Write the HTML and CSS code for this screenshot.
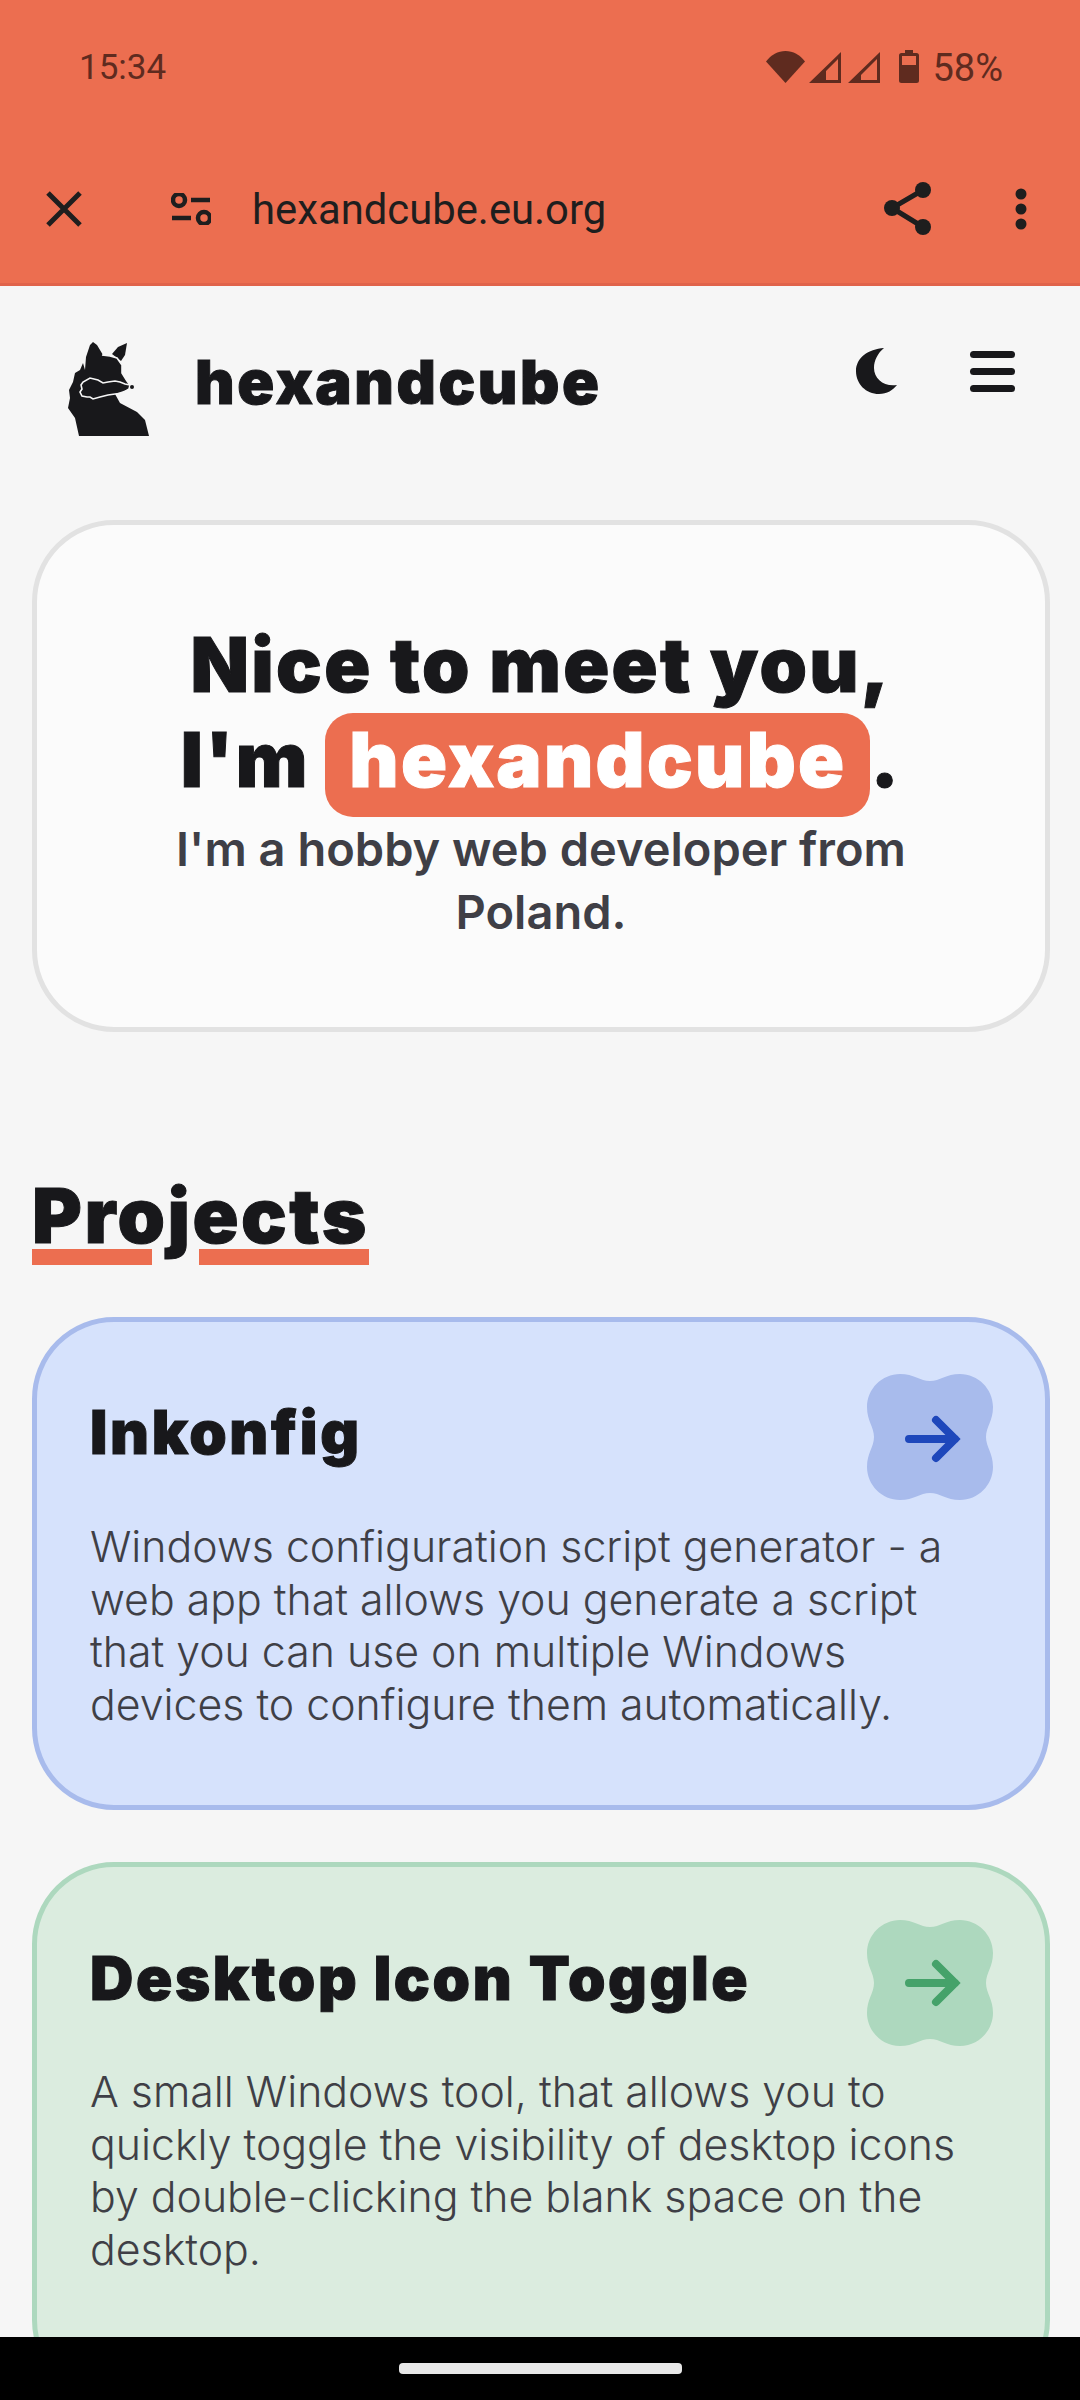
FILE: index.html
```html
<!DOCTYPE html>
<html lang="en">
<head>
    <meta charset="UTF-8">
    <meta name="viewport" content="width=device-width, initial-scale=1.0">
    <title>hexandcube</title>
    <link rel="stylesheet" href="styles.css">
</head>
<body>

<div class="browser-bar">
    <div class="status-row">
        <span class="status-time">15:34</span>
        <div class="status-icons">
            <svg class="icon-wifi" viewBox="0 0 39 32"><path d="M19.5 32 0 10.5C5 4 12 0 19.5 0S34 4 39 10.5Z"/></svg>
            <svg class="icon-signal" viewBox="0 0 32 31"><path d="M32 0V31H0ZM29 7 17 19V28H29Z" fill-rule="evenodd"/></svg>
            <svg class="icon-signal" viewBox="0 0 32 31"><path d="M32 0V31H0ZM29 7 13 23V28H29Z" fill-rule="evenodd"/></svg>
            <svg class="icon-battery" viewBox="0 0 20 33"><path d="M6 0H14V3H17.5Q20 3 20 5.5V30.5Q20 33 17.5 33H2.5Q0 33 0 30.5V5.5Q0 3 2.5 3H6ZM3 6V15H17V6Z" fill-rule="evenodd"/></svg>
            <span class="status-pct">58%</span>
        </div>
    </div>
    <div class="url-row">
        <svg class="icon-close" viewBox="0 0 36 36"><path d="M2 2 34 34M34 2 2 34"/></svg>
        <svg class="icon-tune" viewBox="0 0 40 32"><circle cx="8" cy="7" r="6"/><path d="M20 7H39"/><path d="M1 25H20"/><circle cx="33" cy="25" r="6"/></svg>
        <span class="url-text">hexandcube.eu.org</span>
        <svg class="icon-share" viewBox="0 0 48 54"><path d="M39 8 8 26 39 45"/><circle cx="39" cy="8" r="8"/><circle cx="8" cy="26" r="8"/><circle cx="39" cy="45" r="8"/></svg>
        <svg class="icon-dots" viewBox="0 0 12 42"><circle cx="6" cy="6" r="5.5"/><circle cx="6" cy="21" r="5.5"/><circle cx="6" cy="36" r="5.5"/></svg>
    </div>
</div>

<div class="page">
    <header class="site-header">
        <svg class="fox-logo" viewBox="28 22 82 95">
            <path d="M39 116 35 98 28 88 30 78 29 70 33 62 35 53 40 50 43 43 45 50 46 37 50 25 53 22 57 25 63 35 70 36 77 38 82 45 82 53 87 61 90 65 89 69 75 74 80 83 97 92 105 100 109 116Z"/>
            <path d="M72 34 78 27 87 23 85 35 81 41 Z"/>
            <path class="fox-line" d="M62 35 70 36 77 38 82 45 82 53 87 61 90 65"/>
            <path class="fox-line" d="M90 65 85 64 80 62 75 61 68 62 63 63 58 60 50 58 43 62 41 65 42 69 40 72 42 76 47 77 50 77 53 79 60 77 68 75 75 74 83 73 89 69Z"/>
            <circle class="fox-nose" cx="92" cy="67" r="2"/>
        </svg>
        <span class="site-name">hexandcube</span>
        <div class="header-actions">
            <svg class="icon-moon" viewBox="0 0 41 46"><path d="M28 0C12 1 0 10 0 23 0 36 10 46 23 46 31 46 37 42 41 37 28 39 18 31 18 20 18 12 22 5 28 0Z"/></svg>
            <div class="burger"><span></span><span></span><span></span></div>
        </div>
    </header>

    <section class="hero">
        <h1>Nice to meet you,<br>I'm <span class="name-pill">hexandcube</span>.</h1>
        <p>I'm a hobby web developer from Poland.</p>
    </section>

    <h2 class="section-title">Projects</h2>

    <article class="project project-blue">
        <div class="project-top">
            <h3>Inkonfig</h3>
            <svg class="blob" viewBox="0 0 126 126">
                <path class="blob-bg" d="M63 7C53 7 47 0 33 0 15 0 0 15 0 33 0 47 7 53 7 63 7 73 0 79 0 93 0 111 15 126 33 126 47 126 53 119 63 119 73 119 79 126 93 126 111 126 126 111 126 93 126 79 119 73 119 63 119 53 126 47 126 33 126 15 111 0 93 0 79 0 73 7 63 7Z"/>
                <path class="blob-arrow" d="M42 65H88M69 46 88 65 69 84"/>
            </svg>
        </div>
        <p>Windows configuration script generator - a web app that allows you generate a script that you can use on multiple Windows devices to configure them automatically.</p>
    </article>

    <article class="project project-green">
        <div class="project-top">
            <h3>Desktop Icon Toggle</h3>
            <svg class="blob" viewBox="0 0 126 126">
                <path class="blob-bg" d="M63 7C53 7 47 0 33 0 15 0 0 15 0 33 0 47 7 53 7 63 7 73 0 79 0 93 0 111 15 126 33 126 47 126 53 119 63 119 73 119 79 126 93 126 111 126 126 111 126 93 126 79 119 73 119 63 119 53 126 47 126 33 126 15 111 0 93 0 79 0 73 7 63 7Z"/>
                <path class="blob-arrow" d="M42 63H88M69 44 88 63 69 82"/>
            </svg>
        </div>
        <p>A small Windows tool, that allows you to quickly toggle the visibility of desktop icons by double-clicking the blank space on the desktop.</p>
    </article>
</div>

<div class="nav-bar"><div class="nav-handle"></div></div>

</body>
</html>
```

FILE: styles.css
```css
* {
    box-sizing: border-box;
}
body {
    margin: 0;
    width: 1080px;
    height: 2400px;
    overflow: hidden;
    display: flex;
    flex-direction: column;
    font-family: Inter, "Noto Sans", sans-serif;
    background-color: #f6f6f6;
    color: #18181b;
}

/* browser chrome */
.browser-bar {
    height: 286px;
    flex-shrink: 0;
    background-color: #ec6e50;
    border-bottom: 3px solid #e0634a;
    font-family: Roboto, sans-serif;
}
.status-row {
    height: 171px;
    padding: 50px 77px 0 79px;
    display: flex;
    justify-content: space-between;
    align-items: flex-start;
    color: #5f2b1f;
    font-size: 35px;
    line-height: 36px;
}
.status-icons {
    display: flex;
    align-items: flex-start;
}
.status-icons svg {
    fill: #5f2b1f;
    display: block;
}
.status-pct {
    font-size: 38px;
}
.icon-wifi {
    width: 39px;
    height: 32px;
    margin-top: 1px;
    margin-right: 4px;
}
.icon-signal {
    width: 32px;
    height: 31px;
    margin-top: 2px;
    margin-right: 7px;
}
.icon-battery {
    width: 20px;
    height: 33px;
    margin-left: 12px;
    margin-right: 13px;
}
.url-row {
    display: flex;
    align-items: center;
    height: 76px;
    padding-left: 46px;
    color: #1e1e1e;
}
.url-row svg {
    display: block;
    flex-shrink: 0;
}
.icon-close {
    width: 36px;
    height: 36px;
    fill: none;
    stroke: #1e1e1e;
    stroke-width: 5;
    margin-right: 89px;
}
.icon-tune {
    width: 40px;
    height: 32px;
    fill: none;
    stroke: #1e1e1e;
    stroke-width: 4.5;
    margin-right: 41px;
}
.url-text {
    font-size: 41.8px;
    width: 632px;
}
.icon-share {
    width: 48px;
    height: 54px;
    fill: #1e1e1e;
}
.icon-share path {
    fill: none;
    stroke: #1e1e1e;
    stroke-width: 5;
}
.icon-dots {
    width: 12px;
    height: 42px;
    fill: #1e1e1e;
    margin-left: 83px;
}

/* page */
.page {
    flex: 1;
    overflow: hidden;
    padding: 0 30px 0 32px;
}
.site-header {
    height: 234px;
    padding: 56px 0 0 36px;
    display: flex;
    align-items: flex-start;
}
.fox-logo {
    width: 82px;
    height: 95px;
    fill: #18181b;
}
.fox-line {
    fill: none;
    stroke: #f6f6f6;
    stroke-width: 1.6;
}
.fox-nose {
    fill: #18181b;
}
.site-name {
    font-size: 61px;
    font-weight: 900;
    line-height: 74px;
    letter-spacing: 2.6px;
    -webkit-text-stroke: 1px #18181b;
    margin: 3px 0 0 45px;
}
.header-actions {
    margin-left: auto;
    margin-right: 35px;
    margin-top: 6px;
    display: flex;
    align-items: flex-start;
    gap: 73px;
}
.icon-moon {
    width: 41px;
    height: 46px;
    fill: #18181b;
}
.burger {
    width: 45px;
    padding-top: 3px;
    display: flex;
    flex-direction: column;
    gap: 10px;
}
.burger span {
    display: block;
    height: 7px;
    border-radius: 4px;
    background-color: #18181b;
}

.hero {
    height: 512px;
    padding: 92px 69px 0;
    text-align: center;
    background-color: #fbfbfb;
    border: 5px solid #e2e2e2;
    border-radius: 82px;
}
.hero h1 {
    margin: 0;
    font-size: 76px;
    font-weight: 900;
    line-height: 95px;
    letter-spacing: 2.3px;
    -webkit-text-stroke: 1px #18181b;
}
.name-pill {
    display: inline-block;
    line-height: 93px;
    padding: 0 24px 11px;
    margin-left: -2px;
    color: #fff;
    -webkit-text-stroke: 1px #fff;
    background-color: #ec6e50;
    border-radius: 28px;
}
.hero p {
    margin: 0;
    font-size: 47px;
    font-weight: 600;
    line-height: 63px;
    color: #3f3f46;
}

.section-title {
    margin: 138px 0 0;
    font-size: 76px;
    font-weight: 900;
    line-height: 90px;
    letter-spacing: 2.5px;
    -webkit-text-stroke: 1px #18181b;
    text-decoration: underline;
    text-decoration-color: #ec6e50;
    text-decoration-thickness: 16px;
    text-underline-offset: 6px;
}

.project {
    margin: 52px 0 0;
    padding: 52px 52px 0 53px;
    height: 493px;
    border: 5px solid;
    border-radius: 82px;
}
.project-blue {
    margin-top: 57px;
    background-color: #d6e2fc;
    border-color: #a8bbec;
}
.project-green {
    height: 540px;
    padding-top: 53px;
    background-color: #dbecdf;
    border-color: #add8be;
}
.project-top {
    display: flex;
    justify-content: space-between;
    align-items: flex-start;
}
.project h3 {
    margin: 0;
    font-size: 60px;
    font-weight: 900;
    line-height: 76px;
    letter-spacing: 2.6px;
    -webkit-text-stroke: 1px #18181b;
    padding-top: 20px;
}
.blob {
    width: 126px;
    height: 126px;
    flex-shrink: 0;
}
.blob-arrow {
    fill: none;
    stroke-width: 8;
    stroke-linecap: round;
}
.project-blue .blob-bg {
    fill: #a8bbec;
}
.project-blue .blob-arrow {
    stroke: #1e47bb;
}
.project-green .blob-bg {
    fill: #add8be;
}
.project-green .blob-arrow {
    stroke: #45a26a;
}
.project p {
    margin: 21px 0 0;
    font-size: 42.8px;
    font-weight: 350;
    line-height: 52.5px;
    color: #3f3f46;
}
.project-green p {
    margin-top: 20px;
}

.nav-bar {
    height: 63px;
    flex-shrink: 0;
    background-color: #000;
    padding-top: 26px;
}
.nav-handle {
    width: 283px;
    height: 11px;
    margin: 0 auto;
    border-radius: 4px;
    background-color: #e8e8e8;
}
```
